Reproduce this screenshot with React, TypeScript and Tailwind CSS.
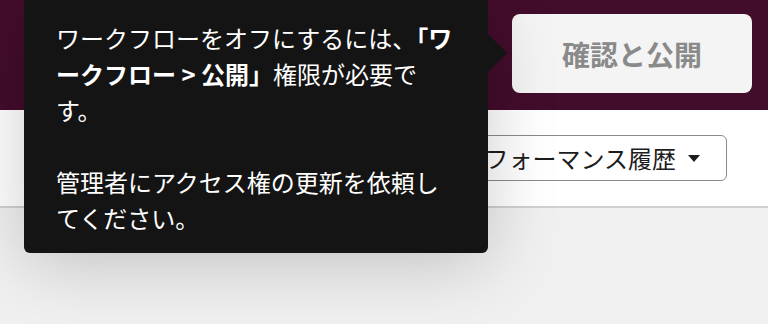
import React from "react";

export default function App() {
  return (
    <div
      className="relative w-[768px] h-[324px] overflow-hidden bg-[#f0f0f0]"
      style={{ fontFamily: '"Noto Sans CJK JP", "Noto Sans", sans-serif' }}
    >
      <header className="flex h-[110px] items-start justify-end bg-[#420c2b] pr-4 pt-[14px]">
        <button className="flex h-[79px] w-[240px] items-center justify-center rounded-lg bg-[#f4f4f4] text-[28px] font-bold text-[#8a8a8a]">
          確認と公開
        </button>
      </header>
      <section className="flex h-[98px] items-center justify-end border-b-2 border-[#d0d0d0] bg-white pr-[41px]">
        <div className="flex h-[46px] items-center gap-3 rounded-md border-[1.5px] border-[#8a8a8a] pl-3 pr-[26px] text-[24px] leading-none text-[#1d1c1d]">
          <span>パフォーマンス履歴</span>
          <svg width="12" height="7" viewBox="0 0 12 7">
            <path d="M0 0 L12 0 L6 7 Z" fill="#1d1c1d" />
          </svg>
        </div>
      </section>
      <div className="absolute left-[24px] top-0 w-[464px] rounded-b-md bg-[#141414] px-8 pb-[17px] pt-5 text-[24px] leading-[36px] text-white shadow-[0_10px_70px_rgba(0,0,0,0.2)]">
        <p>
          ワークフローをオフにするには、
          <span className="font-bold">「ワークフロー &gt; 公開」</span>
          権限が必要です。
        </p>
        <p className="mt-[36px]">管理者にアクセス権の更新を依頼してください。</p>
        <div className="absolute right-[-19px] top-[33px] h-0 w-0 border-y-[20px] border-l-[20px] border-y-transparent border-l-[#141414]" />
      </div>
    </div>
  );
}
